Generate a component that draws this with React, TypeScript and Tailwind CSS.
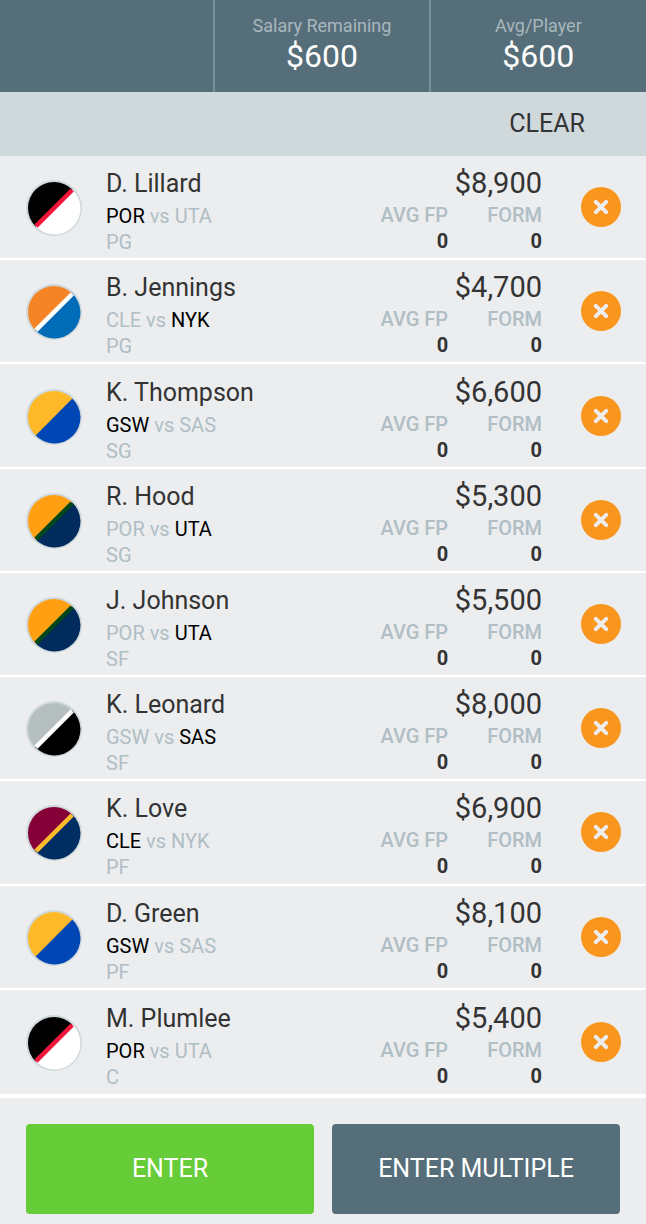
type Team = "POR" | "NYK" | "GSW" | "UTA" | "SAS" | "CLE";

type Player = {
  name: string;
  away: string;
  home: string;
  team: Team;
  position: string;
  salary: string;
};

const PLAYERS: Player[] = [
  { name: "D. Lillard", away: "POR", home: "UTA", team: "POR", position: "PG", salary: "$8,900" },
  { name: "B. Jennings", away: "CLE", home: "NYK", team: "NYK", position: "PG", salary: "$4,700" },
  { name: "K. Thompson", away: "GSW", home: "SAS", team: "GSW", position: "SG", salary: "$6,600" },
  { name: "R. Hood", away: "POR", home: "UTA", team: "UTA", position: "SG", salary: "$5,300" },
  { name: "J. Johnson", away: "POR", home: "UTA", team: "UTA", position: "SF", salary: "$5,500" },
  { name: "K. Leonard", away: "GSW", home: "SAS", team: "SAS", position: "SF", salary: "$8,000" },
  { name: "K. Love", away: "CLE", home: "NYK", team: "CLE", position: "PF", salary: "$6,900" },
  { name: "D. Green", away: "GSW", home: "SAS", team: "GSW", position: "PF", salary: "$8,100" },
  { name: "M. Plumlee", away: "POR", home: "UTA", team: "POR", position: "C", salary: "$5,400" },
];

// upper half, lower half, optional stripe between them
const TEAM_COLORS: Record<Team, { top: string; bottom: string; stripe?: string }> = {
  POR: { top: "#000000", bottom: "#ffffff", stripe: "#f0163a" },
  NYK: { top: "#f58426", bottom: "#006bb6", stripe: "#ffffff" },
  GSW: { top: "#fdb927", bottom: "#0046b5" },
  UTA: { top: "#ff9f12", bottom: "#002b5c", stripe: "#00471b" },
  SAS: { top: "#b6bfbf", bottom: "#000000", stripe: "#ffffff" },
  CLE: { top: "#860038", bottom: "#002d62", stripe: "#fdbb30" },
};

function TeamBadge({ team }: { team: Team }) {
  const { top, bottom, stripe } = TEAM_COLORS[team];
  return (
    <svg viewBox="0 0 56 56" className="mt-0.5 size-14 shrink-0" aria-hidden="true">
      <circle cx="28" cy="28" r="28" fill="#cfd8dc" />
      {/* the lower half runs a little under the upper one so no seam shows */}
      <path d="M45.7 9A26 26 0 1 1 9 45.7Z" fill={bottom} />
      <path d="M9.6 46.4A26 26 0 0 1 46.4 9.6Z" fill={top} />
      {stripe && <path d="M8.4 44.6 44.6 8.4 47.8 11.6 11.6 47.8Z" fill={stripe} />}
    </svg>
  );
}

function Matchup({ player }: { player: Player }) {
  return (
    <p className="text-xl leading-[26px] text-[#b0bec5]">
      <span className={player.away === player.team ? "text-black" : ""}>{player.away}</span> vs{" "}
      <span className={player.home === player.team ? "text-black" : ""}>{player.home}</span>
    </p>
  );
}

function Stat({ label, value }: { label: string; value: number }) {
  return (
    <div className="text-right text-xl leading-[26px]">
      <dt className="font-medium text-[#b0bec5]">{label}</dt>
      <dd className="font-bold">{value}</dd>
    </div>
  );
}

function PlayerRow({ player }: { player: Player }) {
  return (
    <li className="flex items-center border-b-2 border-white pr-[25px] pl-[26px] last:border-b-0">
      <TeamBadge team={player.team} />
      <div className="ml-6 flex-1 pt-1.5">
        <h2 className="text-[25px] leading-[38px]">{player.name}</h2>
        <Matchup player={player} />
        <p className="text-xl leading-[26px] text-[#b0bec5]">{player.position}</p>
      </div>
      <div className="pt-1">
        <p className="text-right text-[29px] leading-[38px]">{player.salary}</p>
        <dl className="flex justify-end gap-[39px]">
          <Stat label="AVG FP" value={0} />
          <Stat label="FORM" value={0} />
        </dl>
      </div>
      <button
        type="button"
        aria-label={`Remove ${player.name}`}
        className="ml-[39px] flex size-10 shrink-0 items-center justify-center rounded-full bg-[#fa961e]"
      >
        <svg viewBox="0 0 16 16" className="size-4" fill="none" stroke="#ecedef" strokeWidth="4" strokeLinecap="round">
          <path d="M2.8 2.8 13.2 13.2M13.2 2.8 2.8 13.2" />
        </svg>
      </button>
    </li>
  );
}

function Summary({ label, value }: { label: string; value: string }) {
  return (
    <div className="border-r-2 border-[#78909c] pt-3 text-center last:border-r-0">
      <p className="text-lg leading-7 text-[#a9b7be]">{label}</p>
      <p className="text-[32px] leading-8 text-white">{value}</p>
    </div>
  );
}

export default function App() {
  return (
    <main className="flex min-h-screen flex-col bg-[#ecedef] font-['Roboto',sans-serif] text-[#333333]">
      <header className="grid h-[92px] grid-cols-3 bg-[#566e79]">
        <div className="border-r-2 border-[#78909c]" />
        <Summary label="Salary Remaining" value="$600" />
        <Summary label="Avg/Player" value="$600" />
      </header>

      <div className="flex h-16 items-center justify-end bg-[#cfd8db] px-[61px]">
        <button type="button" className="text-[25px] leading-9">
          CLEAR
        </button>
      </div>

      <ul className="grid flex-1 auto-rows-fr">
        {PLAYERS.map((player) => (
          <PlayerRow key={player.name} player={player} />
        ))}
      </ul>

      <footer className="grid grid-cols-2 gap-[18px] border-t-4 border-white px-[26px] pt-[26px] pb-2.5 text-[25px] text-white">
        <button type="button" className="h-[90px] rounded-sm bg-[#66cc37]">
          ENTER
        </button>
        <button type="button" className="h-[90px] rounded-sm bg-[#566e79]">
          ENTER MULTIPLE
        </button>
      </footer>
    </main>
  );
}
